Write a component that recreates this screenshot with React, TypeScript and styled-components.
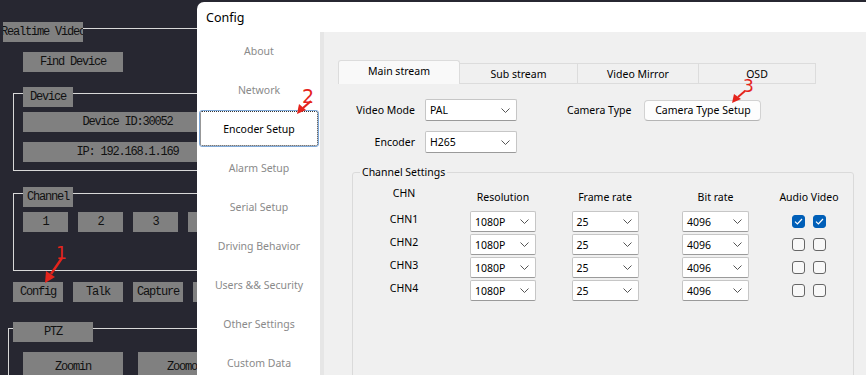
import React from 'react'
import styled, { createGlobalStyle } from 'styled-components'

const GlobalStyle = createGlobalStyle`
  html, body {
    margin: 0;
    padding: 0;
    background: #272731;
  }
`

const Desktop = styled.div`
  position: relative;
  width: 866px;
  height: 375px;
  overflow: hidden;
  background: #272731;
`

/* ---------- dark app behind the dialog ---------- */

const LeftApp = styled.div`
  display: flex;
  flex-direction: column;
  align-items: flex-start;
  width: 330px;
  padding-top: 22px;
  font-family: 'Liberation Mono', monospace;
  font-size: 12px;
  letter-spacing: -1.2px;
  color: #111;
`

const Tile = styled.div<{ $w: number; $h?: number; $mt?: number; $ml?: number }>`
  display: flex;
  align-items: center;
  justify-content: center;
  flex-shrink: 0;
  width: ${p => p.$w}px;
  height: ${p => p.$h ?? 20}px;
  margin-top: ${p => p.$mt ?? 0}px;
  margin-left: ${p => p.$ml ?? 0}px;
  background: #808080;
  overflow: hidden;
  white-space: nowrap;
`

const HeaderRow = styled.div`
  display: flex;
  align-items: flex-start;
  align-self: stretch;
  padding-left: 3px;
`

const HeaderLine = styled.div`
  flex: 1;
  margin-top: 6px;
  border-top: 1px solid #d8d8d8;
`

const Group = styled.div<{ $mt: number; $ml: number; $pb: number }>`
  display: flex;
  flex-direction: column;
  align-items: flex-start;
  width: 320px;
  margin: ${p => p.$mt}px 0 0 ${p => p.$ml}px;
  padding-bottom: ${p => p.$pb}px;
  border: 1px solid #d8d8d8;
`

const Legend = styled(Tile)`
  margin-top: -7px;
`

const TileRow = styled.div<{ $mt: number; $ml: number; $gap: number }>`
  display: flex;
  gap: ${p => p.$gap}px;
  margin: ${p => p.$mt}px 0 0 ${p => p.$ml}px;
`

/* ---------- Config dialog ---------- */

const Dialog = styled.div`
  position: absolute;
  left: 197px;
  top: 2px;
  width: 700px;
  height: 400px;
  display: flex;
  flex-direction: column;
  overflow: hidden;
  background: #fff;
  border-top-left-radius: 7px;
  font-family: 'Noto Sans', sans-serif;
  font-size: 10.5px;
  color: #000;
`

const TitleBar = styled.div`
  flex-shrink: 0;
  height: 30px;
  display: flex;
  align-items: center;
  padding-left: 9px;
  font-size: 12.5px;
`

const Body = styled.div`
  flex: 1;
  min-height: 0;
  display: flex;
`

const Sidebar = styled.div`
  width: 123px;
  flex-shrink: 0;
  display: flex;
  flex-direction: column;
  gap: 4px;
  padding-top: 1px;
`

const NavItem = styled.div<{ $active?: boolean }>`
  flex-shrink: 0;
  height: 35px;
  margin: 0 2px 0 3px;
  display: flex;
  align-items: center;
  justify-content: center;
  box-sizing: border-box;
  color: ${p => (p.$active ? '#000' : '#8a8a8a')};
  border: 1px ${p => (p.$active ? 'dotted #333' : 'solid transparent')};
  outline: ${p => (p.$active ? '1px solid #7fa9d9' : 'none')};
  border-radius: 2px;
`

const Panel = styled.div`
  flex: 1;
  overflow: hidden;
  background: #f0f0f0;
  border-left: 4px solid #e6e6e6;
  padding: 28px 0 0 14px;
`

const TabBar = styled.div`
  display: flex;
  align-items: flex-end;
  height: 24px;
`

const Tab = styled.div<{ $w: number; $active?: boolean }>`
  width: ${p => p.$w}px;
  height: ${p => (p.$active ? 24 : 21)}px;
  box-sizing: border-box;
  display: flex;
  align-items: center;
  justify-content: center;
  padding-bottom: ${p => (p.$active ? 3 : 0)}px;
  background: ${p => (p.$active ? '#f9f9f9' : '#f0f0f0')};
  border: 1px solid #dcdcdc;
  border-bottom: ${p => (p.$active ? 'none' : '1px solid #dcdcdc')};
  border-left: ${p => (p.$active ? '1px solid #dcdcdc' : 'none')};
  border-radius: ${p => (p.$active ? '3px 3px 0 0' : '0')};
`

const Pane = styled.div`
  padding: 15px 0 0 14px;
  display: flex;
  flex-direction: column;
`

const FormRow = styled.div<{ $mt?: number }>`
  display: flex;
  align-items: center;
  height: 22px;
  margin-top: ${p => p.$mt ?? 0}px;
`

const FieldLabel = styled.div<{ $w?: number; $ml?: number }>`
  width: ${p => (p.$w ? `${p.$w}px` : 'auto')};
  margin-left: ${p => p.$ml ?? 0}px;
  text-align: right;
  white-space: nowrap;
`

const ComboBox = styled.div<{ $w: number; $h?: number; $ml?: number }>`
  width: ${p => p.$w}px;
  height: ${p => p.$h ?? 22}px;
  margin-left: ${p => p.$ml ?? 0}px;
  box-sizing: border-box;
  display: flex;
  align-items: center;
  justify-content: space-between;
  padding: 0 6px 0 4px;
  background: #fff;
  border: 1px solid #c6c6c6;
  border-bottom-color: #9a9a9a;
  border-radius: 2px;
`

const PushButton = styled.div`
  width: 117px;
  height: 21px;
  margin-left: 13px;
  box-sizing: border-box;
  display: flex;
  align-items: center;
  justify-content: center;
  background: #fdfdfd;
  border: 1px solid #d2d2d2;
  border-bottom-color: #b5b5b5;
  border-radius: 4px;
`

const ChannelGroup = styled.div`
  width: 502px;
  height: 230px;
  margin-top: 19px;
  box-sizing: border-box;
  border: 1px solid #dadada;
  border-radius: 3px;
  display: flex;
  flex-direction: column;
  align-items: flex-start;
`

const GroupTitle = styled.div`
  margin: -9px 0 0 7px;
  padding: 0 2px;
  height: 16px;
  line-height: 16px;
  background: #f0f0f0;
`

const ChannelGrid = styled.div`
  display: grid;
  grid-template-columns: 70px 128px 76px 145px 42px;
  grid-template-rows: 24px repeat(4, 21px);
  row-gap: 2px;
  justify-items: center;
  margin-top: 5px;
  padding-left: 16px;
`

const ColHead = styled.div<{ $top?: boolean }>`
  align-self: ${p => (p.$top ? 'start' : 'end')};
  padding-bottom: ${p => (p.$top ? 0 : 4)}px;
  line-height: 16px;
  white-space: nowrap;
`

const ChnLabel = styled.div`
  align-self: start;
  line-height: 16px;
`

const CheckPair = styled.div`
  align-self: center;
  display: flex;
  gap: 8px;
`

const CheckBox = styled.div<{ $checked?: boolean }>`
  width: 13px;
  height: 13px;
  box-sizing: border-box;
  border-radius: 3px;
  border: 1px solid ${p => (p.$checked ? '#005fb8' : '#666')};
  background: ${p => (p.$checked ? '#005fb8' : '#f8f8f8')};
  display: flex;
  align-items: center;
  justify-content: center;
`

const Overlay = styled.svg`
  position: absolute;
  left: 0;
  top: 0;
  pointer-events: none;
`

const Chevron = () => (
  <svg width="9" height="5" viewBox="0 0 9 5">
    <polyline points="0.5,0.5 4.5,4.5 8.5,0.5" fill="none" stroke="#555" strokeWidth="1" />
  </svg>
)

const Tick = () => (
  <svg width="9" height="7" viewBox="0 0 9 7">
    <polyline points="1,3.6 3.4,6 8,1" fill="none" stroke="#fff" strokeWidth="1.2" />
  </svg>
)

const Combo = ({ value, w, h, ml }: { value: string; w: number; h?: number; ml?: number }) => (
  <ComboBox $w={w} $h={h} $ml={ml}>
    <span>{value}</span>
    <Chevron />
  </ComboBox>
)

const navItems = [
  'About',
  'Network',
  'Encoder Setup',
  'Alarm Setup',
  'Serial Setup',
  'Driving Behavior',
  'Users && Security',
  'Other Settings',
  'Custom Data',
]

const tabs = [
  { label: 'Main stream', w: 122 },
  { label: 'Sub stream', w: 118 },
  { label: 'Video Mirror', w: 121 },
  { label: 'OSD', w: 117 },
]

const channels = [
  { name: 'CHN1', audio: true, video: true },
  { name: 'CHN2', audio: false, video: false },
  { name: 'CHN3', audio: false, video: false },
  { name: 'CHN4', audio: false, video: false },
]

const RED = '#e5241c'

const App = () => {
  return (
    <Desktop>
      <GlobalStyle />
      <LeftApp>
        <HeaderRow>
          <Tile $w={80}>Realtime Video</Tile>
          <HeaderLine />
        </HeaderRow>
        <Tile $w={100} $mt={10} $ml={23}>Find Device</Tile>

        <Group $mt={21} $ml={13} $pb={8}>
          <Legend $w={50} $ml={9}>Device</Legend>
          <Tile $w={209} $mt={5} $ml={9}>Device ID:30052</Tile>
          <Tile $w={209} $mt={10} $ml={9}>IP: 192.168.1.169</Tile>
        </Group>

        <Group $mt={22} $ml={13} $pb={38}>
          <Legend $w={50} $ml={9}>Channel</Legend>
          <TileRow $mt={5} $ml={9} $gap={10}>
            {['1', '2', '3', '4'].map(n => (
              <Tile key={n} $w={45}>{n}</Tile>
            ))}
          </TileRow>
        </Group>

        <TileRow $mt={11} $ml={13} $gap={10}>
          {['Config', 'Talk', 'Capture', ''].map((n, i) => (
            <Tile key={i} $w={50}>{n}</Tile>
          ))}
        </TileRow>

        <Group $mt={26} $ml={8} $pb={0}>
          <Legend $w={80} $ml={4}>PTZ</Legend>
          <TileRow $mt={10} $ml={14} $gap={15}>
            <Tile $w={100} $h={30}>Zoomin</Tile>
            <Tile $w={100} $h={30}>Zoomout</Tile>
          </TileRow>
        </Group>
      </LeftApp>

      <Dialog>
        <TitleBar>Config</TitleBar>
        <Body>
          <Sidebar>
            {navItems.map(item => (
              <NavItem key={item} $active={item === 'Encoder Setup'}>
                {item}
              </NavItem>
            ))}
          </Sidebar>
          <Panel>
            <TabBar>
              {tabs.map((t, i) => (
                <Tab key={t.label} $w={t.w} $active={i === 0}>
                  {t.label}
                </Tab>
              ))}
            </TabBar>
            <Pane>
              <FormRow>
                <FieldLabel $w={63}>Video Mode</FieldLabel>
                <Combo value="PAL" w={92} ml={10} />
                <FieldLabel $ml={50}>Camera Type</FieldLabel>
                <PushButton>Camera Type Setup</PushButton>
              </FormRow>
              <FormRow $mt={10}>
                <FieldLabel $w={63}>Encoder</FieldLabel>
                <Combo value="H265" w={92} ml={10} />
              </FormRow>

              <ChannelGroup>
                <GroupTitle>Channel Settings</GroupTitle>
                <ChannelGrid>
                  <ColHead $top>CHN</ColHead>
                  <ColHead>Resolution</ColHead>
                  <ColHead>Frame rate</ColHead>
                  <ColHead>Bit rate</ColHead>
                  <ColHead>Audio Video</ColHead>
                  {channels.map(c => (
                    <React.Fragment key={c.name}>
                      <ChnLabel>{c.name}</ChnLabel>
                      <Combo value="1080P" w={66} h={21} />
                      <Combo value="25" w={67} h={21} />
                      <Combo value="4096" w={67} h={21} />
                      <CheckPair>
                        <CheckBox $checked={c.audio}>{c.audio && <Tick />}</CheckBox>
                        <CheckBox $checked={c.video}>{c.video && <Tick />}</CheckBox>
                      </CheckPair>
                    </React.Fragment>
                  ))}
                </ChannelGrid>
              </ChannelGroup>
            </Pane>
          </Panel>
        </Body>
      </Dialog>

      {/* red hand-drawn annotations */}
      <Overlay width="866" height="375" viewBox="0 0 866 375">
        <text x="56" y="259" fill={RED} fontSize="17" fontFamily="DejaVu Sans, sans-serif">1</text>
        <path d="M62 258 L51 274" stroke={RED} strokeWidth="2.4" fill="none" />
        <polygon points="45,283 46,271 55,277" fill={RED} />

        <text x="302" y="103" fill={RED} fontSize="19" fontFamily="DejaVu Sans, sans-serif">2</text>
        <path d="M311 101 L303 108" stroke={RED} strokeWidth="2.2" fill="none" />
        <polygon points="297,114 299,104 306,110" fill={RED} />

        <text x="743" y="92" fill={RED} fontSize="17" fontFamily="DejaVu Sans, sans-serif">3</text>
        <path d="M745 91 L738 97" stroke={RED} strokeWidth="2" fill="none" />
        <polygon points="732,103 734,94 741,99" fill={RED} />
      </Overlay>
    </Desktop>
  )
}

export default App
